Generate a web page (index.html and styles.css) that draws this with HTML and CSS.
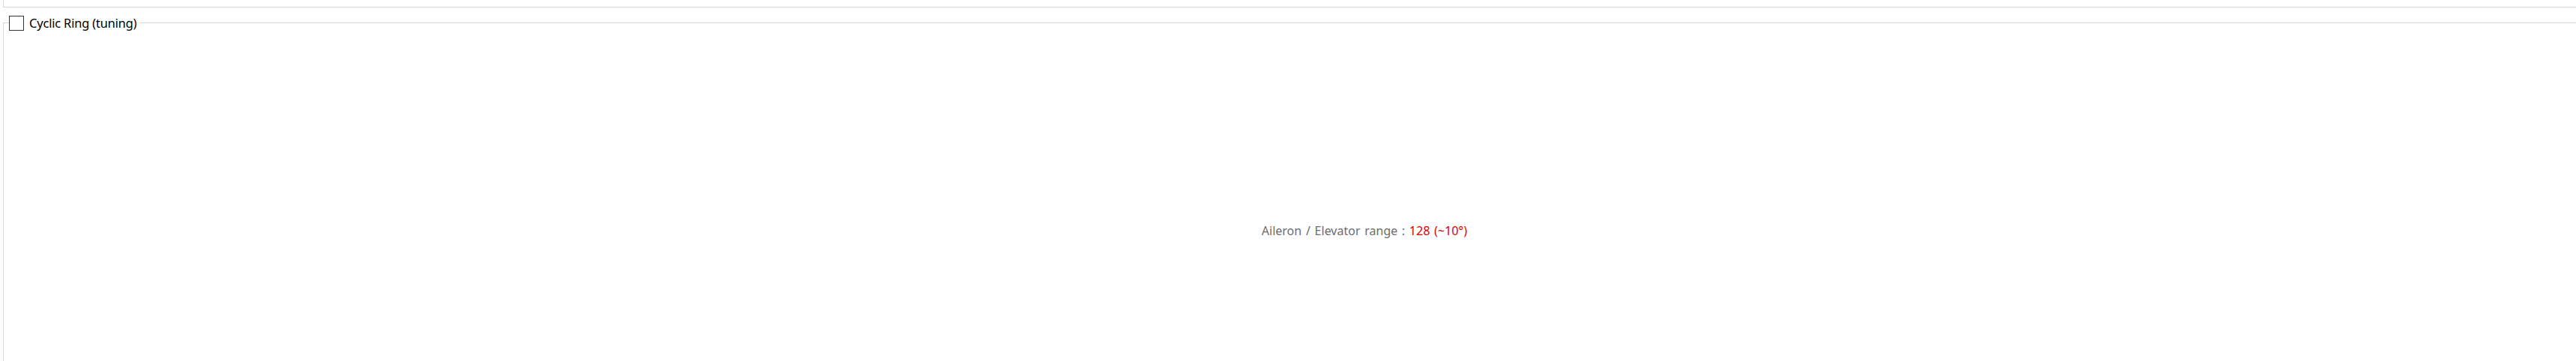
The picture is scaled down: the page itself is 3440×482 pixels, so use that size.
FILE: index.html
```html
<!DOCTYPE html>
<html>
<head>
<meta charset="utf-8">
<link rel="stylesheet" href="styles.css">
</head>
<body>
<div class="prev"></div>
<fieldset class="group">
  <legend class="group-legend"><span class="check"></span><span class="legend-text">Cyclic Ring (tuning)</span></legend>
  <div class="range"><span class="range-label">Aileron / Elevator range : </span><span class="range-value">128 (~10°)</span></div>
</fieldset>
</body>
</html>
```
FILE: styles.css
```css
html, body { margin: 0; padding: 0; background: #fff; }
body { overflow: hidden; width: 3440px; height: 482px; font-family: "Noto Sans", sans-serif; }
.prev { height: 9px; margin-left: 4px; border-left: 1px solid #d8d8d8; border-bottom: 1px solid #d8d8d8; }
.group { margin: 9px 0 0 4px; padding: 0; border: 1px solid #d8d8d8; border-right: none; border-bottom: none; width: 3436px; height: 473px; box-sizing: border-box; }
.group-legend { margin-left: 7px; padding: 0 3px 0 0; display: flex; align-items: center; gap: 7px; font-size: 16.5px; letter-spacing: -0.2px; line-height: normal; color: #000; }
.check { width: 18px; height: 18px; border: 1px solid #333; display: block; flex: none; }
.legend-text { display: block; }
.range { text-align: center; padding: 256px 0 0 199px; font-size: 16px; line-height: 20px; word-spacing: 1.6px; color: #6d6d6d; }
.range-value { color: #e00000; }
```
